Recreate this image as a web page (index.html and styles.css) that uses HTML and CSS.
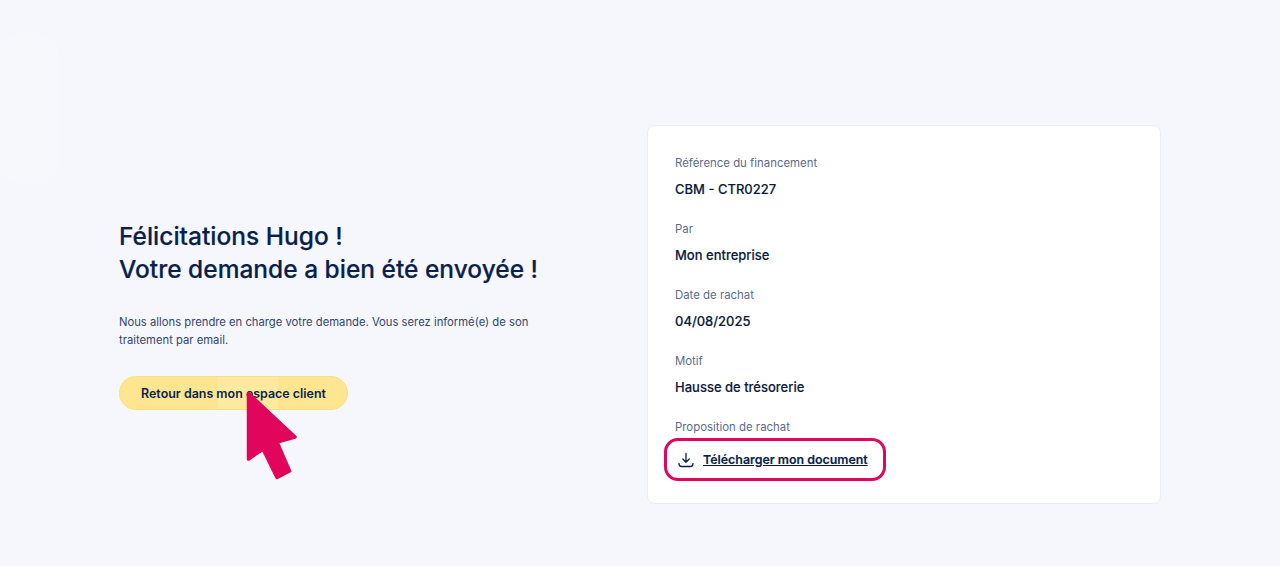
FILE: index.html
```html
<!DOCTYPE html>
<html lang="fr">
<head>
<meta charset="utf-8">
<title>Demande envoyée</title>
<link rel="stylesheet" href="styles.css">
</head>
<body>
<div class="ghost"></div>
<main class="page">
  <section class="intro">
    <h1 class="title">Félicitations Hugo !<br>Votre demande a bien été envoyée !</h1>
    <p class="lead">Nous allons prendre en charge votre demande. Vous serez informé(e) de son traitement par email.</p>
    <div class="cta-wrap">
      <a class="cta" href="#"><span class="cta-shine"></span><span class="cta-label">Retour dans mon espace client</span></a>
      <svg class="cursor" width="54" height="92" viewBox="0 0 54 92" aria-hidden="true">
        <path d="M3.500 2.500 L50 46 L32 51 L44.500 80 L32 86.500 L18 58 L3.500 68 Z" fill="#e2055c" stroke="#e2055c" stroke-width="3.500" stroke-linejoin="round"/>
      </svg>
    </div>
  </section>
  <section class="card">
    <div class="field"><div class="label">Référence du financement</div><div class="value">CBM - CTR0227</div></div>
    <div class="field"><div class="label">Par</div><div class="value">Mon entreprise</div></div>
    <div class="field"><div class="label">Date de rachat</div><div class="value">04/08/2025</div></div>
    <div class="field"><div class="label">Motif</div><div class="value">Hausse de trésorerie</div></div>
    <div class="field"><div class="label">Proposition de rachat</div>
      <div class="value download-row">
        <a class="download" href="#">
          <svg class="dl-icon" width="16" height="16" viewBox="0 0 16 16" fill="none" stroke="#0b1f4b" stroke-width="1.3" stroke-linecap="round" stroke-linejoin="round" aria-hidden="true">
            <path d="M8 1.500V10M4.800 7L8 10.200 11.200 7M1 11.500c0 1.800 1 3 2.500 3h9c1.500 0 2.500-1.200 2.500-3"/>
          </svg>
          <span class="dl-text">Télécharger mon document</span>
        </a>
      </div>
    </div>
  </section>
</main>
</body>
</html>
```
FILE: styles.css
```css
html, body { margin: 0; height: 100%; }
body {
  background: #f5f7fc;
  font-family: "Inter", "Noto Sans", sans-serif;
  color: #0b1f4b;
  overflow: hidden;
  position: relative;
}
.ghost {
  position: absolute;
  left: -2px;
  top: 33px;
  width: 61px;
  height: 151px;
  border-radius: 22px;
  background: #f7f8fb;
}
.page {
  position: relative;
  display: flex;
  justify-content: space-between;
  padding: 125px 119px 0 119px;
}
.intro { width: 430px; padding-top: 95px; }
.title {
  margin: 0;
  font-size: 24.5px;
  line-height: 33px;
  font-weight: 500;
  color: #0a1f4d;
  -webkit-text-stroke: 0.2px #0a1f4d;
}
.lead {
  margin: 27px 0 0;
  font-size: 11.25px;
  line-height: 18px;
  color: #33456d;
}
.cta-wrap { position: relative; margin-top: 27px; width: 229px; }
.cta {
  position: relative;
  display: flex;
  align-items: center;
  justify-content: center;
  height: 32px;
  border: 1px solid #fadf85;
  border-radius: 17px;
  background: #fde68f;
  text-decoration: none;
  overflow: hidden;
}
.cta-shine {
  position: absolute;
  left: 98px;
  top: 0;
  bottom: 0;
  width: 60px;
  background: #feea9f;
}
.cta-label {
  position: relative;
  font-size: 12.45px;
  font-weight: 600;
  color: #0a1f4d;
}
.cursor { position: absolute; left: 126px; top: 15px; }
.card {
  box-sizing: border-box;
  width: 514px;
  height: 379px;
  padding: 29px 27px 0;
  background: #fff;
  border: 1px solid #e9edf5;
  border-radius: 8px;
}
.field { height: 66px; }
.label {
  font-size: 11.4px;
  line-height: 16px;
  color: #5a6b8c;
}
.value {
  margin-top: 8px;
  font-size: 13px;
  line-height: 20px;
  font-weight: 500;
  color: #0c1b3d;
  -webkit-text-stroke: 0.15px #0c1b3d;
}
.download-row { margin: 3px 0 0 -11px; }
.download {
  display: inline-flex;
  align-items: center;
  box-sizing: border-box;
  width: 222px;
  height: 43px;
  padding-left: 11px;
  gap: 9px;
  border: 3px solid #e2055c;
  border-radius: 14px;
  color: #0a1f4d;
  text-decoration: none;
}
.dl-text {
  font-size: 12.4px;
  font-weight: 600;
  text-decoration: underline;
}
```
